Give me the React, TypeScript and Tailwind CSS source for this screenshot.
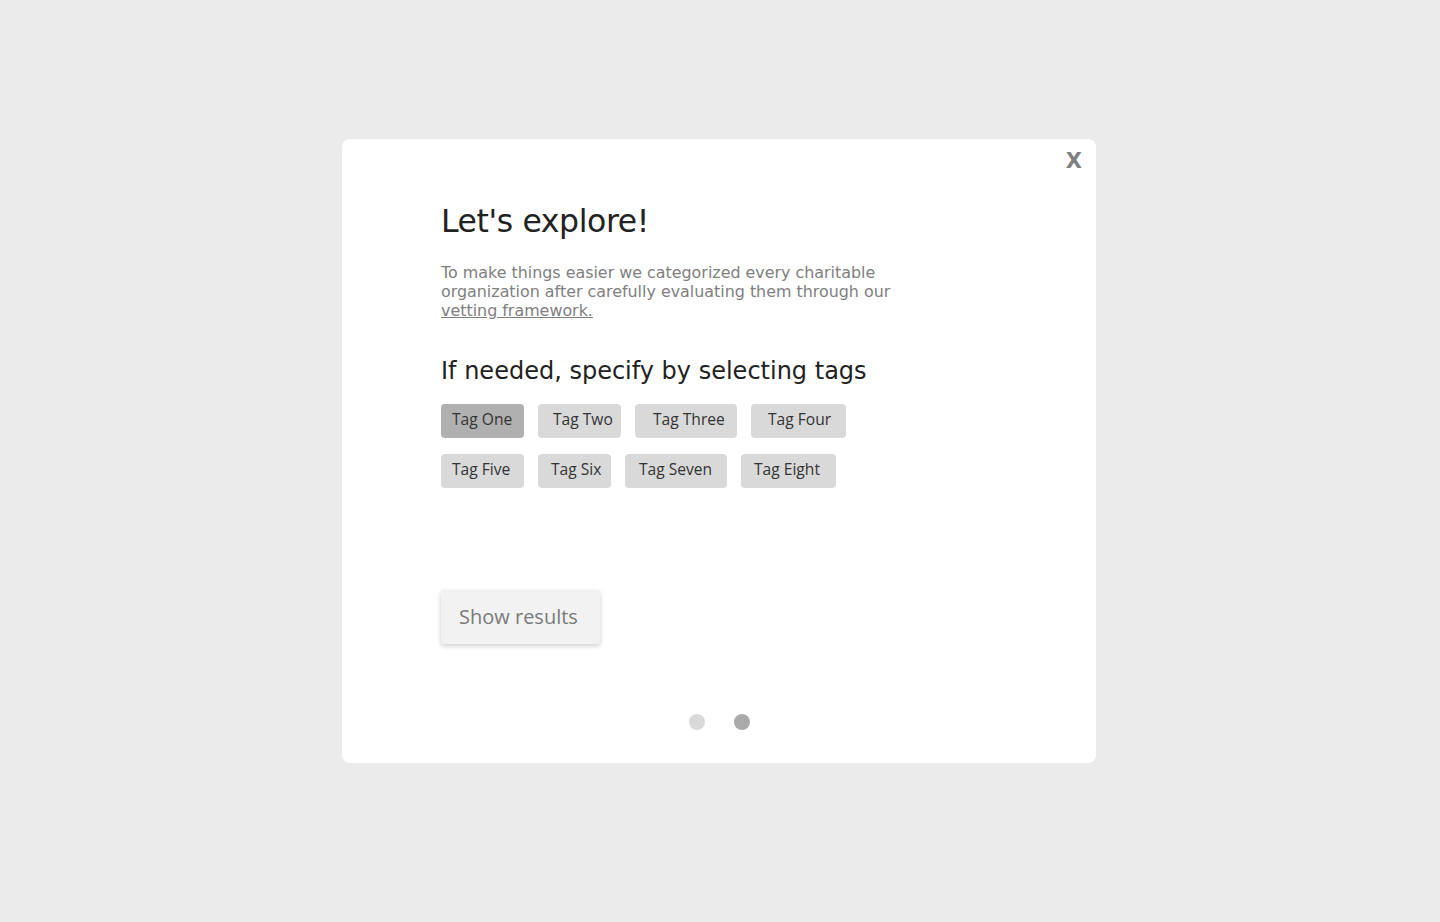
import React, { useState } from "react";

const heading = { fontFamily: '"DejaVu Sans", "Liberation Sans", sans-serif' };
const body = { fontFamily: '"Open Sans", "Liberation Sans", sans-serif' };

const tags = [
  [
    { label: "Tag One", w: "w-[83px]", pl: "pl-[11px]" },
    { label: "Tag Two", w: "w-[83px]", pl: "pl-[15px]" },
    { label: "Tag Three", w: "w-[102px]", pl: "pl-[18px]" },
    { label: "Tag Four", w: "w-[95px]", pl: "pl-[17px]" },
  ],
  [
    { label: "Tag Five", w: "w-[83px]", pl: "pl-[11px]" },
    { label: "Tag Six", w: "w-[73px]", pl: "pl-[13px]" },
    { label: "Tag Seven", w: "w-[102px]", pl: "pl-[14px]" },
    { label: "Tag Eight", w: "w-[95px]", pl: "pl-[13px]" },
  ],
];

export default function App() {
  const [selected, setSelected] = useState<string[]>(["Tag One"]);

  const toggle = (t: string) =>
    setSelected((s) => (s.includes(t) ? s.filter((x) => x !== t) : [...s, t]));

  return (
    <div className="w-full h-[922px] bg-[#ebebeb] flex items-start justify-center pt-[139px] pr-[2px]">
      <div className="w-[754px] h-[624px] bg-white rounded-[8px] relative flex flex-col pl-[99px] pt-[62px]">
        <button
          className="absolute top-[12px] right-[14px] text-[#808080] text-[21px] leading-none font-bold"
          style={heading}
        >
          X
        </button>
        <h1 className="text-[31.5px] leading-[40px] text-[#222] tracking-[-0.4px]" style={heading}>
          Let's explore!
        </h1>
        <p
          className="mt-[22px] w-[480px] text-[15.9px] leading-[19px] text-[#808080]"
          style={heading}
        >
          To make things easier we categorized every charitable <br />
          organization after carefully evaluating them through our <br />
          <a href="#" className="underline">vetting framework.</a>
        </p>
        <h2 className="mt-[36px] text-[24px] leading-[30px] text-[#222]" style={heading}>
          If needed, specify by selecting tags
        </h2>
        <div className="mt-[18px] flex flex-col gap-[16px]">
          {tags.map((row, i) => (
            <div key={i} className="flex gap-[14px]">
              {row.map((t) => (
                <button
                  key={t.label}
                  onClick={() => toggle(t.label)}
                  className={`${t.w} ${t.pl} h-[34px] rounded-[4px] text-left text-[15.6px] leading-[30px] text-[#333] pb-[4px] ${
                    selected.includes(t.label) ? "bg-[#b0b0b0]" : "bg-[#d9d9d9]"
                  }`}
                  style={body}
                >
                  {t.label}
                </button>
              ))}
            </div>
          ))}
        </div>
        <button
          className="mt-[102px] w-[159px] h-[54px] bg-[#f2f2f2] rounded-[3px] shadow-[0_2px_5px_rgba(0,0,0,0.2)] text-left pl-[18px] text-[20px] text-[#7a7a7a]"
          style={body}
        >
          Show results
        </button>
        <div className="mt-[70px] -ml-[99px] flex justify-center gap-[29px]">
          <span className="w-[16px] h-[16px] rounded-full bg-[#d9d9d9]" />
          <span className="w-[16px] h-[16px] rounded-full bg-[#aaaaaa]" />
        </div>
      </div>
    </div>
  );
}
